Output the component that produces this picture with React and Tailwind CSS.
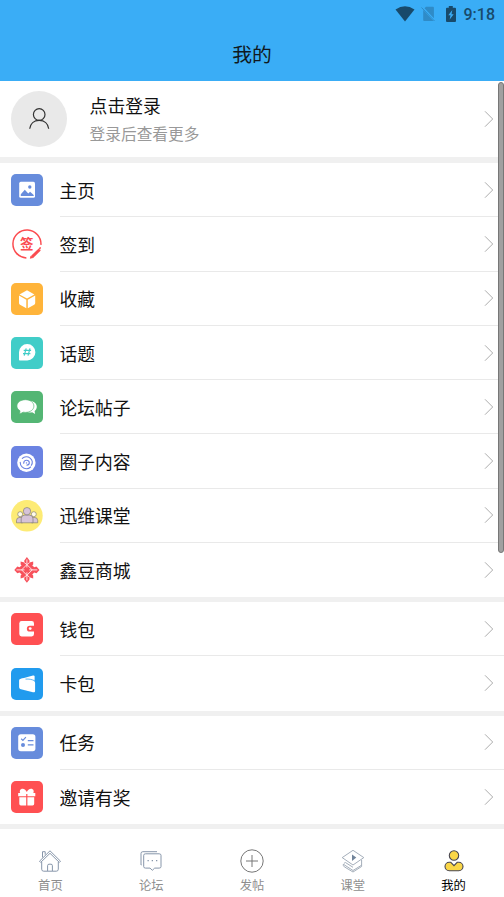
import React from "react";

const FONT = "font-['Noto_Sans_CJK_SC',sans-serif]";

function Tile({ color, children }) {
  return (
    <svg viewBox="0 0 32 32" className="h-8 w-8 shrink-0">
      {color && <rect width="32" height="32" rx="5" fill={color} />}
      {children}
    </svg>
  );
}

const HomeIcon = () => (
  <Tile color="#678cdc">
    <rect x="8.2" y="7.8" width="15.8" height="16" rx="1.6" fill="#fff" />
    <path d="M9.8 22v-1.8l4-4.4 3.5 3.6 1.8-1.7 3.6 3.4V22z" fill="#678cdc" />
    <circle cx="18.8" cy="13" r="1.7" fill="#678cdc" />
  </Tile>
);

const SignIcon = () => (
  <Tile>
    <path d="M15.4 29.9A14 14 0 1 1 29.9 16.9M29.4 19.2l-.8 2" fill="none" stroke="#fb4c50" strokeWidth="1.5" />
    <path d="M20.8 29.2l7.9-7.7" stroke="#fb4c50" strokeWidth="3" />
    <path d="M18.8 30.8l.8-3 2.3 2.3z" fill="#fb4c50" />
    <text x="15.8" y="20.8" textAnchor="middle" fontSize="13.5" fontWeight="700" fill="#fb4c50">签</text>
  </Tile>
);

const CollectIcon = () => (
  <Tile color="#ffb43a">
    <path d="M16 7.2l7.4 4.2L16 15.6l-7.5-4.2z" fill="#fff" />
    <path d="M8 12.6l7.3 4.2v8.4L9 21.7q-1-.6-1-1.7zM24.2 12.6l-7.4 4.2v8.4l6.4-3.5q1-.6 1-1.7z" fill="#fff" />
  </Tile>
);

const TopicIcon = () => (
  <Tile color="#41cdc8">
    <path d="M8 22.8V15.2a8.2 8.2 0 1 1 8.2 8.2H8.7q-.7 0-.7-.6z" fill="#fff" />
    <path d="M15.2 11.3l-2 7.4M19 11.3l-2 7.4M12.7 13.4h7.4M12 16.7h7.4" stroke="#41cdc8" strokeWidth="1.2" />
  </Tile>
);

const ForumIcon = () => (
  <Tile color="#54b674">
    <path d="M17 10.2c5-.8 8.8 1.9 8.8 5.6 0 1.8-.9 3.2-2.2 4.3l.5 2.8-3-1.6c-2.3.5-4.6.1-6.2-1z" fill="#fff" />
    <path d="M14.4 8.7c4.8 0 8.5 2.8 8.5 6.4s-3.7 6.3-8.5 6.3c-.8 0-1.6-.1-2.3-.2l-3.4 1.9.3-3.3c-2-1.2-3.1-2.8-3.1-4.7 0-3.6 3.7-6.4 8.5-6.4z" fill="#fff" stroke="#54b674" strokeWidth="0.7" />
  </Tile>
);

const CircleIcon = () => (
  <Tile color="#6b83e2">
    <circle cx="15.4" cy="16.7" r="9.2" fill="#fff" />
    <path d="M9.2 16.2c0 3.8 2.8 6.5 6.2 6.5 1.7 0 3.2-.7 4.2-1.7M11.3 12.4c2-2 5.5-2.2 7.8-.3 2.3 2 2.8 4.7 1.2 7.2M12.7 17.2c0-1.8 1.2-3 2.9-3 1.6 0 2.8 1.2 2.7 2.7-.1 1.3-1.1 2.2-2.4 2.2" fill="none" stroke="#6b83e2" strokeWidth="1.1" strokeLinecap="round" />
    <circle cx="15.5" cy="16.9" r=".7" fill="#6b83e2" />
  </Tile>
);

const ClassIcon = () => (
  <Tile>
    <circle cx="15.9" cy="15.8" r="15.8" fill="#fdeb75" />
    <g stroke="#73706b" strokeWidth="0.6">
      <path d="M5.5 22.8v-2.4q0-3 3.5-3h2.6v5.4zM26.7 22.8v-2.4q0-3-3.5-3h-2.6v5.4z" fill="#d6c3d8" />
      <circle cx="9.2" cy="14.2" r="2.5" fill="#fffbe9" />
      <circle cx="22.8" cy="14.2" r="2.5" fill="#fffbe9" />
      <path d="M10.2 22.8v-4q0-3.7 3.5-3.7h4.8q3.5 0 3.5 3.7v4z" fill="#d6c3d8" />
      <circle cx="16" cy="11.2" r="3.7" fill="#d6c3d8" />
    </g>
  </Tile>
);

const MallIcon = () => (
  <Tile>
    <path d="M15.900 3l2.600 3.400v2.200l3.700-1.200v3l-1 .8 2 2 2.300-.6 3 3.300-3 3.300-2.300-.6-2 2 1 .8v3l-3.700-1.200v2.200l-2.600 3.400-2.600-3.400v-2.200l-3.700 1.200v-3l1-.8-2-2-2.300.6-3-3.300 3-3.300 2.300.6 2-2-1-.8v-3l3.700 1.200V6.400z" fill="#f7515b" />
    <g stroke="#ffecee" strokeWidth="0.9" fill="none">
      <path d="M15.900 10.600l5.300 5.300-5.300 5.300-5.300-5.300z" />
      <path d="M15.900 5.500v8M15.900 18.300v8M5.500 15.900h8M18.300 15.900h8" />
      <path d="M13.200 8.600l2.700 2 2.700-2M13.200 23.200l2.700-2 2.700 2" />
    </g>
  </Tile>
);

const WalletIcon = () => (
  <Tile color="#ff5052">
    <rect x="8.3" y="8.1" width="14.7" height="15.3" rx="2.3" fill="#fff" />
    <path d="M18.8 12.7H24v5.9h-5.2a2.95 2.95 0 0 1 0-5.9z" fill="#ff5052" />
    <circle cx="19.2" cy="15.6" r="1.4" fill="#fff" />
  </Tile>
);

const CardIcon = () => (
  <Tile color="#219bee">
    <path d="M9.3 11l12.7-3.5q1.6-.3 1.6 1v4.3H9.3z" fill="#fff" />
    <path d="M10.2 10.7c4.4-.4 8.5.2 12 1.8 1.3.6 1.9 1.2 1.9 2.5v7.7c0 1.4-.8 1.9-2.1 1.5L10 21.2c-1.200-.3-1.900-.9-1.900-2.200v-6.200c0-1.400.7-2 2.100-2.100z" fill="#fff" />
    <path d="M14.500 11.100c3.500-.2 6.200.2 9.100 1.600" stroke="#219bee" strokeWidth=".7" fill="none" />
  </Tile>
);

const TaskIcon = () => (
  <Tile color="#678cdc">
    <rect x="7.2" y="7.2" width="17.2" height="17" rx="2.6" fill="#fff" />
    <path d="M10.2 11.8l1.7 1.6 3-3.2M16.8 13.7h5.7M16.8 17.9h5.7" fill="none" stroke="#678cdc" strokeWidth="1.2" />
    <circle cx="12" cy="18" r="2" fill="#678cdc" />
  </Tile>
);

const GiftIcon = () => (
  <Tile color="#ff5052">
    <path d="M7.2 12h2c-1.100-2 .2-4.200 2.300-4.200 2.100 0 3.400 1.500 4.300 3.200.9-1.700 2.200-3.200 4.300-3.200s3.300 2.200 2.200 4.200h2v3.300h-7.900V13h-1.200v2.300h-8z" fill="#fff" />
    <path d="M8.300 16.200h6.900v8.200H9.900q-1.600 0-1.600-1.600zM16.400 16.200h6.800v6.600q0 1.600-1.600 1.600h-5.200z" fill="#fff" />
  </Tile>
);

function Chevron() {
  return (
    <svg viewBox="0 0 10 18" className="h-[18px] w-2.5 shrink-0" fill="none" stroke="#adadad" strokeWidth="1">
      <path d="M1 1.300L8.700 9 1 16.700" />
    </svg>
  );
}

const groups = [
  {
    gap: "mt-[6px]",
    rows: [
      ["主页", HomeIcon],
      ["签到", SignIcon],
      ["收藏", CollectIcon],
      ["话题", TopicIcon],
      ["论坛帖子", ForumIcon],
      ["圈子内容", CircleIcon],
      ["迅维课堂", ClassIcon],
      ["鑫豆商城", MallIcon],
    ],
  },
  {
    gap: "mt-[4.8px]",
    rows: [
      ["钱包", WalletIcon],
      ["卡包", CardIcon],
    ],
  },
  {
    gap: "mt-[4.8px]",
    rows: [
      ["任务", TaskIcon],
      ["邀请有奖", GiftIcon],
    ],
  },
];

function Row({ label, Icon, last }) {
  return (
    <div className="flex h-[54.3px] items-center pl-[11px]">
      <Icon />
      <div className={`ml-[17px] flex h-full flex-1 items-center justify-between border-b pr-[10px] ${last ? "border-transparent" : "border-[#e9e9e9]"}`}>
        <span className="-ml-[0.6px] text-[17.8px] leading-6 text-[#111]">{label}</span>
        <Chevron />
      </div>
    </div>
  );
}

const TabHome = () => (
  <svg viewBox="0 0 24 24" className="h-6 w-6" fill="none" stroke="#8796aa" strokeWidth="1">
    <path d="M1.5 12.2L12 1.8l10.500 10.400-1.200 1.200L12 4.300l-9.300 9.100zM4.500 8.500V2.700h2.700v3M3.700 13v7.200q0 2 2 2h12.600q2 0 2-2V13M9.600 22v-5.300q0-1.500 1.400-1.500h2q1.400 0 1.400 1.500V22" />
  </svg>
);
const TabForum = () => (
  <svg viewBox="0 0 24 24" className="h-6 w-6" fill="none" stroke="#8796aa" strokeWidth="1">
    <path d="M2.500 16H2V4.500q0-1.800 1.800-1.800H18M6.500 4.800h13.700q1.800 0 1.800 1.500v11.300q0 1.500-1.800 1.500h-4.500l-2.400 2.200-2.300-2.200H6.500q-1.800 0-1.800-1.500V6.300q0-1.500 1.800-1.500z" />
    <path d="M8.500 11.700h1.300M12.700 11.700H14M17 11.700h1.300" strokeWidth="1.300" />
  </svg>
);
const TabPost = () => (
  <svg viewBox="0 0 24 24" className="h-6 w-6" fill="none" stroke="#777" strokeWidth="1">
    <circle cx="12" cy="12" r="11.2" />
    <path d="M12 6v12M6 12h12" />
  </svg>
);
const TabClass = () => (
  <svg viewBox="0 0 24 24" className="h-6 w-6" fill="none" stroke="#9aa5b2" strokeWidth="0.9">
    <path d="M12 1.300l10.800 7.300L12 16 1.200 8.600z" />
    <path d="M20.600 10.800v5.400L12 21.500l-9.700-6.300q-.3 1.800 1 2.600L12 23l8.600-5.500v-1.300M3 14.300l1.400-.8 7.600 4.800" />
    <path d="M11 5.500l4.300 3.100L11 12z" fill="#71849a" stroke="none" />
  </svg>
);
const TabMine = () => (
  <svg viewBox="0 0 24 24" className="h-6 w-6" fill="#fad647" stroke="#474550" strokeWidth="1.1">
    <circle cx="12" cy="6.500" r="4.700" />
    <path d="M7.200 13.300h1.600l3.200 3.400 3.200-3.400h1.600a4.200 4.200 0 0 1 0 8.400H7.200a4.200 4.200 0 0 1 0-8.400z" />
  </svg>
);

const tabs = [
  ["首页", TabHome],
  ["论坛", TabForum],
  ["发帖", TabPost],
  ["课堂", TabClass],
  ["我的", TabMine],
];

export default function App() {
  return (
    <div className={`relative flex h-[897px] w-[504px] flex-col overflow-hidden bg-white ${FONT}`}>
      <header className="h-[81px] shrink-0 bg-[#3aadf6] text-[#184a6b]">
        <div className="flex h-7 items-center justify-end pr-[9px]">
          <svg viewBox="0 0 20 16" className="h-4 w-5" fill="currentColor">
            <path d="M.5 3.500Q10-3.200 19.500 3.500L10 15.500z" />
          </svg>
          <svg viewBox="0 0 14 16" className="ml-[6px] h-4 w-3.5" fill="#2f8bc7">
            <path d="M5 .8h7q.9 0 .9.900v10.500L3.500 2.300zM2.200 4L12.600 15H3.100q-.9 0-.9-.9z" />
            <path d="M.5 1.500l13 13.500" stroke="#2f8bc7" strokeWidth="1" />
            <path d="M1.300 1.100l12.500 13" stroke="#3aadf6" strokeWidth=".8" />
          </svg>
          <svg viewBox="0 0 12 16" className="ml-[10px] h-4 w-3" fill="currentColor">
            <path d="M3.800 0h4v1.700H10q1 0 1 1V15q0 1-1 1H2q-1 0-1-1V2.700q0-1 1-1h1.800z" />
            <path d="M7.300 4L3.300 9.200h2.200l-.8 4.300 4-5.300H6.500z" fill="#3aadf6" />
          </svg>
          <span className="ml-[7px] pt-px font-[Roboto] text-[16px] leading-5 font-medium">9:18</span>
        </div>
        <h1 className="mt-[11px] text-center text-[19.8px] leading-[30px] text-[#101820]">我的</h1>
      </header>

      <main className="min-h-0 flex-1 overflow-hidden bg-[#f0f0f0]">
        <section className="flex h-[76px] items-center bg-white pr-[10px] pl-[11px]">
          <div className="flex h-14 w-14 items-center justify-center rounded-full bg-[#e9e9e9]">
            <svg viewBox="0 0 22 22" className="h-[22px] w-[22px]" fill="none" stroke="#333" strokeWidth="1.2">
              <circle cx="11.2" cy="6.5" r="5.8" />
              <path d="M1.700 20.700c.6-5 4.300-8.400 9.500-8.400s8.900 3.400 9.500 8.400" />
            </svg>
          </div>
          <div className="ml-[22.6px] flex-1">
            <div className="text-[17.8px] leading-7 text-[#111]">点击登录</div>
            <div className="pt-px text-[15.7px] leading-[27px] text-[#999]">登录后查看更多</div>
          </div>
          <Chevron />
        </section>
        {groups.map(({ gap, rows }) => (
          <section key={rows[0][0]} className={`bg-white ${gap}`}>
            {rows.map(([label, Icon], j) => (
              <Row key={label} label={label} Icon={Icon} last={j === rows.length - 1} />
            ))}
          </section>
        ))}
        <div className="mt-[5px] h-4 bg-white" />
      </main>

      <nav className="grid h-[59px] shrink-0 grid-cols-5 bg-white">
        {tabs.map(([label, Icon], i) => (
          <div key={label} className={`flex flex-col items-center pt-[11px] text-[12.3px] leading-6 ${i === 4 ? "text-black" : "text-[#8e8e8e]"}`}>
            <Icon />
            <span>{label}</span>
          </div>
        ))}
      </nav>

      <div className="absolute top-[82px] right-0 h-[471px] w-[6px] rounded-full border border-[#777] bg-[#a0a0a0]" />
    </div>
  );
}
